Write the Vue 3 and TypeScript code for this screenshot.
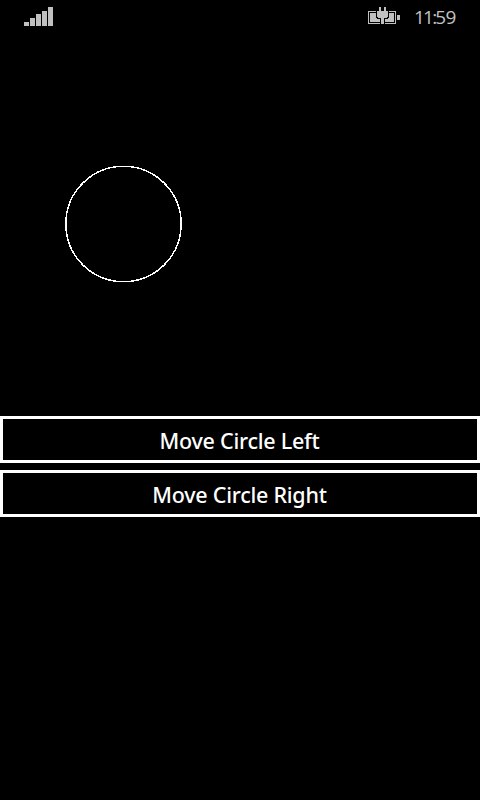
<script setup lang="ts">
import { ref } from 'vue'

const offset = ref(0)
const step = 20

function move(direction: number): void {
  offset.value += direction * step
}
</script>

<template>
  <main class="phone">
    <header class="status">
      <svg class="signal" width="29" height="20" viewBox="0 0 29 20" shape-rendering="crispEdges">
        <path d="M0 15h5v4H0zM6 11h5v8H6zM12 7h5v12h-5zM18 4h5v15h-5zM24 0h5v19h-5z" />
      </svg>
      <svg class="battery" width="32" height="17" viewBox="0 0 32 17" shape-rendering="crispEdges">
        <path fill-rule="evenodd" d="M0 4h28v13H0zM1 5v11h26V5z" />
        <path d="M2 6h6v5h1v1h3v3H2zM26 6h-5v5h-1v1h-3v3h9zM29 8h3v5h-3z" />
        <path class="plug-gap" d="M8 3h13v8h-1v1h-3v5h-5v-5H9v-1H8z" />
        <path d="M11 0h2v4h3V0h2v4h2v6h-1v1h-3v6h-3v-6h-3v-1H9V4h2z" />
      </svg>
      <time class="clock"><span class="hour">11:</span>59</time>
    </header>
    <section class="canvas">
      <svg class="scene" width="480" height="382" viewBox="0 0 480 382">
        <circle :cx="123.5 + offset" cy="190" r="57.7" shape-rendering="crispEdges" />
      </svg>
    </section>
    <div class="controls">
      <button type="button" class="action left" @click="move(-1)"><span>Move Circle Left</span></button>
      <button type="button" class="action right" @click="move(1)"><span>Move Circle Right</span></button>
    </div>
  </main>
</template>

<style>
body {
  background: #000;
}
</style>

<style scoped>
.phone {
  height: 800px;
  overflow: hidden;
  background: #000;
  color: #fff;
  font-family: "Noto Sans", "Open Sans", sans-serif;
}
.status {
  display: flex;
  align-items: flex-start;
  box-sizing: border-box;
  height: 34px;
  padding: 7px 24px 0;
  color: #c0c0c0;
}
.status svg {
  flex: none;
  fill: #c0c0c0;
}
.battery {
  margin-left: auto;
}
.battery .plug-gap {
  fill: #000;
}
.clock {
  width: 42px;
  margin-left: 14px;
  font-family: "Open Sans", "Noto Sans", sans-serif;
  font-size: 19px;
  line-height: 20px;
  letter-spacing: -0.7px;
  white-space: nowrap;
}
.hour {
  letter-spacing: -1.8px;
}
.scene {
  display: block;
}
.scene circle {
  fill: none;
  stroke: #fff;
  stroke-width: 1.5;
}
.controls {
  display: flex;
  flex-direction: column;
  gap: 7px;
}
.action {
  box-sizing: border-box;
  width: 100%;
  height: 47px;
  padding: 3px 1px 0 0;
  border: 3px solid #fff;
  border-radius: 0;
  background: #000;
  color: #fff;
  font-family: "Noto Sans", "Open Sans", sans-serif;
  font-size: 21.5px;
  font-weight: 500;
  line-height: 30px;
  letter-spacing: -0.25px;
}
</style>
